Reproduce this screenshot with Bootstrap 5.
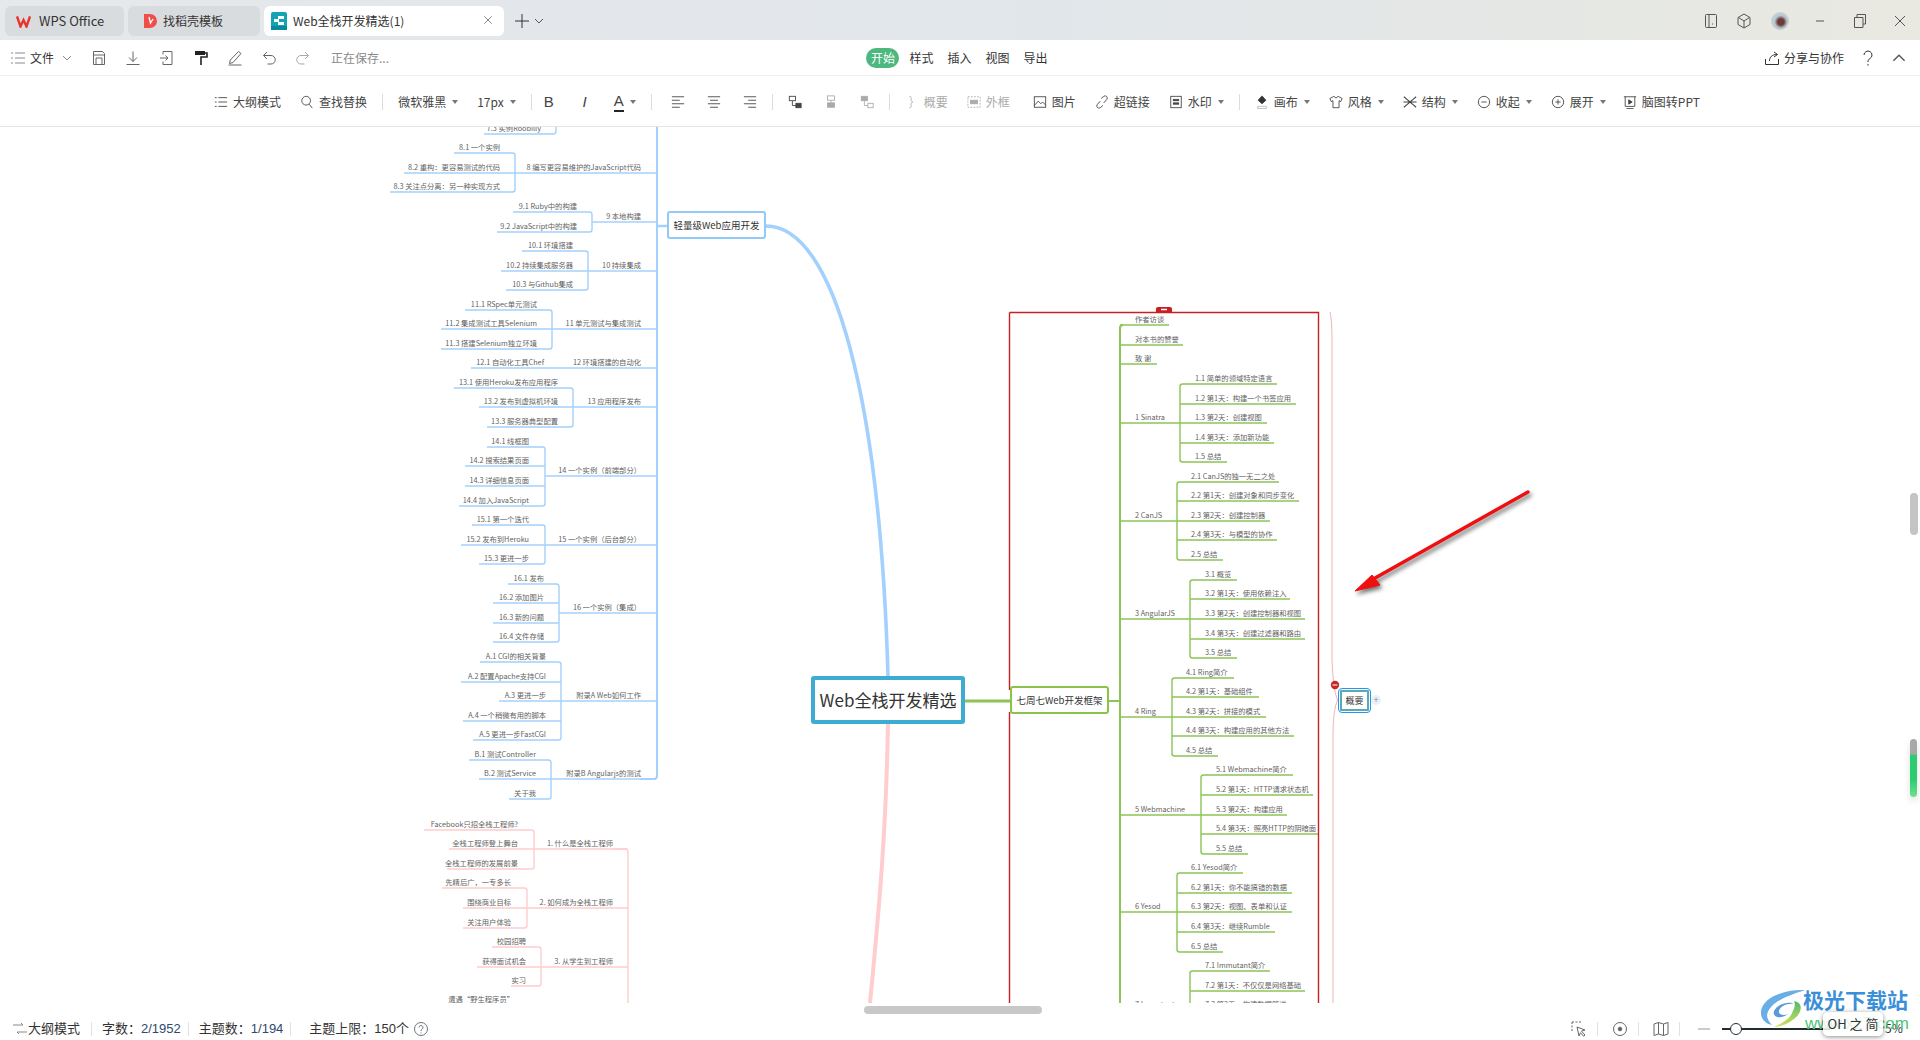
<!DOCTYPE html>
<html lang="zh-CN">
<head>
<meta charset="utf-8">
<title>Web全栈开发精选</title>
<link href="https://cdn.jsdelivr.net/npm/bootstrap@5.3.0/dist/css/bootstrap.min.css" rel="stylesheet">
<style>
html,body{height:100%;overflow:hidden;background:#fff}
body{font-family:"Noto Sans CJK SC","Liberation Sans",sans-serif;font-size:12px;color:#333}
.wps-app{height:1040px;width:1920px;position:relative}
.wps-i{width:16px;height:16px;flex:none;fill:none;stroke:currentColor;stroke-width:1;display:block}
.wps-titlebar{height:40px;background:linear-gradient(90deg,#e6e8eb,#e1e6ea 55%,#e9e9e1);padding:6px 0 4px 5px;flex:none}
.wps-tab{height:30px;border-radius:6px;background:#d9dcdf;padding-left:19px;gap:6px;margin-right:4px;flex:none;color:#333}
.wps-tab-a{width:119px;padding-left:11px;gap:8px;font-size:13px}.wps-tab-b{width:132px;padding-left:15px}.wps-tab-c{width:240px;background:#fff;padding-left:7px;position:relative}
.wps-tabx{position:absolute;left:218px;top:8px;color:#666}
.wps-plus{margin-left:6px;color:#333}.wps-chev{margin-left:4px;width:10px;height:10px;color:#555}
.wps-winbtns{margin-left:auto;color:#555}
.wps-winbtn{width:40px;display:flex;justify-content:center;align-items:center}
.wps-winbtn-n{width:33px}
.wps-avatar{width:18px;height:18px;border-radius:50%;background:radial-gradient(circle at 55% 55%,#6b3a3a 0 22%,#b9c8ce 45%,#d5dee2);}
.wps-menubar{height:36px;border-bottom:1px solid #f0f0f0;flex:none}
.wps-side{flex:1 1 0;min-width:0}
.wps-slot{width:34px;display:flex;justify-content:center;color:#666}
.wps-pill{background:#4cb87e;color:#fff;border-radius:10px;height:20px;line-height:20px;width:33px;white-space:nowrap}
.wps-mi{margin-left:10px}.wps-mi+.wps-mi{margin-left:14px}
.wps-muted{color:#8a8a8a}
.wps-ml10{margin-left:10px}.wps-ml11{margin-left:11px}
.wps-mr14{margin-right:14px}.wps-mr6{margin-right:6px}
.wps-toolbar{height:51px;border-bottom:1px solid #e5e5e5;flex:none;color:#444;padding:2px 6px 0 0}
.wps-tool{margin-left:19px;gap:5px;flex:none}
.wps-btn{margin-left:22px;flex:none;width:14px;display:flex;justify-content:center}
.wps-tool .wps-i,.wps-btn .wps-i{width:14px;height:14px}
.wps-sep{width:1px;height:16px;background:#dcdcdc;margin:0 15px;flex:none}
.wps-off{color:#aaa}
.wps-caret{width:0;height:0;border-left:3px solid transparent;border-right:3px solid transparent;border-top:4px solid #777;margin-left:1px;flex:none}
.wps-glyph{font-family:"Liberation Sans",sans-serif;font-size:15px;line-height:18px}
.wps-tb-b{margin-left:-5px}
.wps-tb-a{margin-left:22px}
.wps-tb-wide{margin-left:23px}
.wps-tb-near{margin-left:17px}
.wps-canvas{height:876px;position:relative;overflow:hidden;flex:none}
.wps-map{position:absolute;left:0;top:0;width:1920px;height:876px}
.wps-map text{font-family:"Noto Sans CJK SC","Liberation Sans",sans-serif;font-size:7.3px;fill:#5f5f5f}
.wps-node{position:absolute;display:flex;align-items:center;justify-content:center;background:#fff;color:#333;border-radius:3px;white-space:nowrap}
.wps-root{left:811px;top:549px;width:154px;height:48px;border:4px solid #3eabd0;font-size:17px}
.wps-n-green{left:1010px;top:559px;width:99px;height:28px;border:2px solid #8bc34a;font-size:9.5px}
.wps-n-blue{left:667px;top:84px;width:99px;height:28px;border:2px solid #90caf9;font-size:9.5px}
.wps-n-sum{left:1338px;top:561px;width:33px;height:25px;padding:1px;border:1.5px solid #2196f3;border-radius:4px;font-size:9px}
.wps-n-sum-in{flex:1;align-self:stretch;display:flex;align-items:center;justify-content:center;border:2px solid #5aa9b5;border-radius:1px}
.wps-addbtn{position:absolute;left:1371px;top:568px;width:10px;height:10px;border-radius:50%;background:#eceff5;color:#8a93a5;font-size:9px;line-height:10px;text-align:center}
.wps-vs{position:absolute;background:#c4c4c4;border-radius:4px}
.wps-vs1{left:1910px;top:366px;width:8px;height:42px}
.wps-vs2{left:1910px;top:612px;width:7px;height:58px;background:linear-gradient(#a8a8a8 0 26%,#2ecc71 28%,#2ecc71 70%,#6fe08f);box-shadow:0 4px 7px rgba(0,0,0,.12)}
.wps-hsbar{height:14px;padding:3px 0 3px 864px;flex:none}
.wps-hsthumb{width:178px;height:8px;border-radius:4px;background:#c8c8c8}
.wps-status{height:23px;flex:1 0 auto;font-family:"Liberation Sans","Noto Sans CJK SC",sans-serif;font-size:13px;padding-left:12px;color:#333}
.wps-stsep{width:1px;height:14px;background:#e2e2e2;margin:0 10px 0 7px;flex:none}
.wps-stnum{color:#2f4a6d}
.wps-sticon{width:36px;margin-left:4px;display:flex;justify-content:center;color:#666}
.wps-stdiv{width:1px;height:14px;background:#e2e2e2;flex:none}
.wps-slider{width:108px;height:2px;background:#222c33;position:relative;margin-left:10px;margin-right:90px}
.wps-knob{position:absolute;left:8px;top:-5px;width:12px;height:12px;border-radius:50%;background:#fff;border:1.5px solid #222c33}
.wps-mark{position:absolute;left:1760px;top:988px;width:150px;height:50px;pointer-events:none}
.wps-mark-t{position:absolute;left:43px;top:0;font-family:"Liberation Sans","Noto Sans CJK SC",sans-serif;font-weight:700;font-size:21px;line-height:25px;color:#3a8fd8;white-space:nowrap}
.wps-mark-u{position:absolute;left:45px;top:26px;font-family:"Liberation Sans",sans-serif;font-size:17px;line-height:20px;color:#4fc37a;white-space:nowrap}
.wps-ime{position:absolute;left:1823px;top:1012px;width:60px;height:24px;background:rgba(255,255,255,.82);border-radius:5px;box-shadow:0 1px 5px rgba(0,0,0,.45);font-size:13px;line-height:24px;text-align:center;color:#333;white-space:nowrap}
.wps-pct{position:absolute;left:1885px;top:1020px;font-size:12px;line-height:16px;color:#333}
.wps-arrow{filter:drop-shadow(2px 3px 2px rgba(0,0,0,.55))}
</style>
</head>
<body>
<svg width="0" height="0" class="position-absolute">
<defs>
<symbol id="i-lines" viewBox="0 0 16 16"><path d="M1 3h2M5 3h10M1 8h2M5 8h10M1 13h2M5 13h10"/></symbol>
<symbol id="i-chev" viewBox="0 0 10 10"><path d="M1 3l4 4 4-4"/></symbol>
<symbol id="i-save" viewBox="0 0 16 16"><path d="M2.5 1.5h9l2 2v11h-11zM2.5 5h11M5 14.5V8h6v6.5" /></symbol>
<symbol id="i-down" viewBox="0 0 16 16"><path d="M8 1.5v10M4 7.5l4 4 4-4M1.5 14.5h13"/></symbol>
<symbol id="i-exp" viewBox="0 0 16 16"><path d="M4 1.5h9v13H4M4 1.5v3M4 11.5v3M1 8h8M6.5 5.5 9 8l-2.5 2.5"/></symbol>
<symbol id="i-brush" viewBox="0 0 16 16"><path fill="#222" stroke="none" d="M2 1h10v4H2z"/><path d="M12 3h2v4H8v8" stroke="#222" stroke-width="1.6"/></symbol>
<symbol id="i-pen" viewBox="0 0 16 16"><path d="M11.5 1.5l2.5 2-8 9-3.5 1 .8-3.500zM1.500 15h13"/></symbol>
<symbol id="i-undo" viewBox="0 0 16 16"><path d="M6 2 2.500 5.500 6 9M2.500 5.500H10a3.800 3.800 0 0 1 0 8.500H6.500"/></symbol>
<symbol id="i-redo" viewBox="0 0 16 16"><path d="M10 2l3.500 3.500L10 9M13.500 5.500H6a3.800 3.800 0 0 0 0 8.500h3.500"/></symbol>
<symbol id="i-search" viewBox="0 0 16 16"><circle cx="7" cy="6.500" r="5"/><path d="M10.500 10.500 14 15"/></symbol>
<symbol id="i-al" viewBox="0 0 16 16"><path d="M1 2h14M1 6h9M1 10h14M1 14h9"/></symbol>
<symbol id="i-ac" viewBox="0 0 16 16"><path d="M1 2h14M3.500 6h9M1 10h14M3.500 14h9"/></symbol>
<symbol id="i-ar" viewBox="0 0 16 16"><path d="M1 2h14M6 6h9M1 10h14M6 14h9"/></symbol>
<symbol id="i-n1" viewBox="0 0 16 16"><rect x="1.500" y="1.500" width="7" height="5"/><path d="M5 6.500V12h4"/><rect x="9" y="9.500" width="6" height="5" fill="currentColor"/></symbol>
<symbol id="i-n2" viewBox="0 0 16 16"><rect x="4" y="1" width="8" height="5"/><path d="M8 6v3"/><rect x="4" y="9" width="8" height="5" fill="currentColor"/></symbol>
<symbol id="i-n3" viewBox="0 0 16 16"><rect x="1.500" y="1.500" width="7" height="5" fill="currentColor"/><path d="M5 6.500V12h4"/><rect x="9" y="9.500" width="6" height="5"/></symbol>
<symbol id="i-brace" viewBox="0 0 16 16"><path d="M5 1.500c2.500 0 2 1.500 2 3.500s.5 2.500 2 3c-1.500.5-2 1-2 3s.5 3.500-2 3.500"/></symbol>
<symbol id="i-frame" viewBox="0 0 16 16"><rect x="1" y="2" width="14" height="12" stroke-dasharray="2 1.500"/><rect x="4" y="6" width="8" height="4" fill="currentColor"/></symbol>
<symbol id="i-img" viewBox="0 0 16 16"><rect x="1.500" y="2" width="13" height="12"/><path d="M1.500 12 6 7l3 3 2-2 3.500 3.500"/></symbol>
<symbol id="i-link" viewBox="0 0 16 16"><path d="M7 4l3-2.500a2.500 2.500 0 0 1 3.500 3.500L10 9M9 12l-3 2.500A2.500 2.500 0 0 1 2.500 11L6 7"/></symbol>
<symbol id="i-wm" viewBox="0 0 16 16"><rect x="2" y="1.500" width="12" height="13"/><rect x="5" y="5" width="6" height="1.500" fill="currentColor"/><rect x="5" y="9" width="6" height="1.500" fill="currentColor"/></symbol>
<symbol id="i-bucket" viewBox="0 0 16 16"><path d="M8 1l4.500 5-4.500 4-4.500-4z" fill="#333"/><path d="M3 13h10v2.500H3z" stroke="#bbb"/></symbol>
<symbol id="i-shirt" viewBox="0 0 16 16"><path d="M5.500 1.500 1 4l1.500 3.500L4.500 6.500v8h7v-8l2 1L15 4l-4.500-2.500L8 3.500z"/></symbol>
<symbol id="i-fish" viewBox="0 0 16 16"><path d="M1 2l3.500 3 3.500 3 3.500-3L15 2M1 14l3.500-3L8 8l3.500 3L15 14M.5 8h15" stroke-width="1.200"/></symbol>
<symbol id="i-minus" viewBox="0 0 16 16"><circle cx="8" cy="8" r="6.500"/><path d="M5 8h6"/></symbol>
<symbol id="i-plus" viewBox="0 0 16 16"><circle cx="8" cy="8" r="6.500"/><path d="M5 8h6M8 5v6"/></symbol>
<symbol id="i-ppt" viewBox="0 0 16 16"><path d="M1 2h14M2.500 2v11h11V2M4 15.500h8"/><path d="M6.500 5.500v5l4-2.500z" fill="currentColor"/></symbol>
<symbol id="i-share" viewBox="0 0 16 16"><path d="M10 2l3.500 2.500L10 7M13 4.500C8 4.500 5.500 7 5.500 11M1.500 14.500h13M1.500 9v5.500M14.500 9v5.500"/></symbol>
<symbol id="i-phone" viewBox="0 0 16 16"><rect x="2.500" y="1.500" width="11" height="13" rx="1"/><path d="M6 1.500v13M9 11h1"/></symbol>
<symbol id="i-cube" viewBox="0 0 16 16"><path d="M8 1l6 3.500v7L8 15l-6-3.500v-7zM2.500 4.500 8 8l5.500-3.500M8 8v7"/></symbol>
<symbol id="i-restore" viewBox="0 0 16 16"><path d="M5 4V1.500h8.500V11H11M2.500 4.500H11v10H2.500z"/></symbol>
<symbol id="i-x" viewBox="0 0 16 16"><path d="M3 3l10 10M13 3 3 13"/></symbol>
<symbol id="i-outline" viewBox="0 0 16 16"><path d="M1 4h10l-2-2M15 11H5l2 2"/></symbol>
<symbol id="i-sel" viewBox="0 0 16 16"><path d="M1 1h9M1 1v9" stroke-dasharray="2 1.500"/><path d="M6 6l8 3-3.500 1.200L14 14l-1.500 1.200-3-3.500L8 15z"/></symbol>
<symbol id="i-target" viewBox="0 0 16 16"><circle cx="8" cy="8" r="6.500"/><circle cx="8" cy="8" r="1.800" fill="currentColor"/></symbol>
<symbol id="i-map" viewBox="0 0 16 16"><path d="M1 3l4.500-1.500 5 1.500L15 1.500v11.500L10.500 14.500 5.500 13 1 14.500zM5.500 1.500V13M10.500 3v11.500"/></symbol>
</defs>
</svg>

<div class="wps-app d-flex flex-column">

  <div class="wps-titlebar d-flex align-items-center">
    <div class="wps-tab wps-tab-a d-flex align-items-center">
      <svg width="15" height="13" viewBox="0 0 15 13"><path d="M1 1.500 4.500 11.500 7.500 5 10.500 11.500 14 1.500" fill="none" stroke="#e6352b" stroke-width="2.400"/></svg>
      <span>WPS Office</span>
    </div>
    <div class="wps-tab wps-tab-b d-flex align-items-center">
      <svg width="14" height="16" viewBox="0 0 14 16"><path d="M1 1h6a7 7 0 0 1 0 14H1z" fill="#ef4f48"/><path d="M6 4l1.500 6L10 6" fill="none" stroke="#fff" stroke-width="1.300"/></svg>
      <span>找稻壳模板</span>
    </div>
    <div class="wps-tab wps-tab-c d-flex align-items-center">
      <svg width="16" height="18" viewBox="0 0 16 18"><rect width="16" height="18" rx="2" fill="#12a3b4"/><rect x="0" y="14" width="16" height="4" fill="#0c8898"/><rect x="7" y="4" width="6" height="3" fill="#fff"/><rect x="3" y="7" width="5" height="3" fill="#fff"/><rect x="7" y="10" width="6" height="3" fill="#fff"/></svg>
      <span>Web全栈开发精选(1)</span>
      <svg class="wps-i wps-tabx" style="width:12px;height:12px"><use href="#i-x"/></svg>
    </div>
    <svg class="wps-i wps-plus" viewBox="0 0 16 16" stroke-width="1.500"><path d="M1 8h14M8 1v14"/></svg>
    <svg class="wps-i wps-chev"><use href="#i-chev"/></svg>
    <div class="wps-winbtns d-flex align-items-center">
      <div class="wps-winbtn wps-winbtn-n"><svg class="wps-i"><use href="#i-phone"/></svg></div>
      <div class="wps-winbtn wps-winbtn-n"><svg class="wps-i"><use href="#i-cube"/></svg></div>
      <div class="wps-winbtn"><div class="wps-avatar"></div></div>
      <div class="wps-winbtn"><svg class="wps-i" viewBox="0 0 16 16"><path d="M4 8h8"/></svg></div>
      <div class="wps-winbtn"><svg class="wps-i"><use href="#i-restore"/></svg></div>
      <div class="wps-winbtn"><svg class="wps-i"><use href="#i-x"/></svg></div>
    </div>
  </div>

  <div class="wps-menubar d-flex align-items-center">
    <div class="wps-side d-flex align-items-center">
      <svg class="wps-i wps-ml10 wps-muted"><use href="#i-lines"/></svg>
      <span class="ms-1">文件</span>
      <svg class="wps-i wps-chev ms-2 wps-muted"><use href="#i-chev"/></svg>
      <div class="wps-slot wps-ml10"><svg class="wps-i"><use href="#i-save"/></svg></div>
      <div class="wps-slot"><svg class="wps-i"><use href="#i-down"/></svg></div>
      <div class="wps-slot"><svg class="wps-i"><use href="#i-exp"/></svg></div>
      <div class="wps-slot"><svg class="wps-i"><use href="#i-brush"/></svg></div>
      <div class="wps-slot"><svg class="wps-i"><use href="#i-pen"/></svg></div>
      <div class="wps-slot"><svg class="wps-i"><use href="#i-undo"/></svg></div>
      <div class="wps-slot wps-off"><svg class="wps-i"><use href="#i-redo"/></svg></div>
      <span class="wps-muted wps-ml11">正在保存...</span>
    </div>
    <div class="d-flex align-items-center wps-mr6">
      <span class="wps-pill text-center">开始</span>
      <span class="wps-mi">样式</span>
      <span class="wps-mi">插入</span>
      <span class="wps-mi">视图</span>
      <span class="wps-mi">导出</span>
    </div>
    <div class="wps-side d-flex align-items-center justify-content-end">
      <svg class="wps-i me-1"><use href="#i-share"/></svg>
      <span>分享与协作</span>
      <svg class="wps-i ms-3" viewBox="0 0 16 16"><path d="M4 5a4 4 0 1 1 6 3.500C8.500 9.500 8 10 8 12M8 14v1.500"/></svg>
      <svg class="wps-i wps-chev ms-3 wps-mr14" viewBox="0 0 10 10" style="width:14px;height:14px"><path d="M1 7l4-4 4 4"/></svg>
    </div>
  </div>

  <div class="wps-toolbar d-flex align-items-center justify-content-center">
    <div class="wps-tool ms-0 d-flex align-items-center"><svg class="wps-i"><use href="#i-lines"/></svg><span>大纲模式</span></div>
    <div class="wps-tool d-flex align-items-center"><svg class="wps-i"><use href="#i-search"/></svg><span>查找替换</span></div>
    <div class="wps-sep"></div>
    <div class="wps-tool ms-0 d-flex align-items-center"><span>微软雅黑</span><i class="wps-caret"></i></div>
    <div class="wps-tool d-flex align-items-center"><span>17px</span><i class="wps-caret"></i></div>
    <div class="wps-sep"></div>
    <div class="wps-btn wps-tb-b wps-glyph">B</div>
    <div class="wps-btn fst-italic wps-glyph">I</div>
    <div class="wps-tool wps-tb-a d-flex align-items-center"><span class="border-bottom border-2 border-dark wps-glyph">A</span><i class="wps-caret"></i></div>
    <div class="wps-sep"></div>
    <div class="wps-btn ms-1"><svg class="wps-i"><use href="#i-al"/></svg></div>
    <div class="wps-btn"><svg class="wps-i"><use href="#i-ac"/></svg></div>
    <div class="wps-btn"><svg class="wps-i"><use href="#i-ar"/></svg></div>
    <div class="wps-sep"></div>
    <div class="wps-btn ms-0"><svg class="wps-i"><use href="#i-n1"/></svg></div>
    <div class="wps-btn wps-off"><svg class="wps-i"><use href="#i-n2"/></svg></div>
    <div class="wps-btn wps-off"><svg class="wps-i"><use href="#i-n3"/></svg></div>
    <div class="wps-sep"></div>
    <div class="wps-tool ms-0 d-flex align-items-center wps-off"><svg class="wps-i"><use href="#i-brace"/></svg><span>概要</span></div>
    <div class="wps-tool d-flex align-items-center wps-off"><svg class="wps-i"><use href="#i-frame"/></svg><span>外框</span></div>
    <div class="wps-tool wps-tb-wide d-flex align-items-center"><svg class="wps-i"><use href="#i-img"/></svg><span>图片</span></div>
    <div class="wps-tool d-flex align-items-center"><svg class="wps-i"><use href="#i-link"/></svg><span>超链接</span></div>
    <div class="wps-tool d-flex align-items-center"><svg class="wps-i"><use href="#i-wm"/></svg><span>水印</span><i class="wps-caret"></i></div>
    <div class="wps-sep"></div>
    <div class="wps-tool ms-0 d-flex align-items-center"><svg class="wps-i"><use href="#i-bucket"/></svg><span>画布</span><i class="wps-caret"></i></div>
    <div class="wps-tool d-flex align-items-center"><svg class="wps-i"><use href="#i-shirt"/></svg><span>风格</span><i class="wps-caret"></i></div>
    <div class="wps-tool d-flex align-items-center"><svg class="wps-i"><use href="#i-fish"/></svg><span>结构</span><i class="wps-caret"></i></div>
    <div class="wps-tool d-flex align-items-center"><svg class="wps-i"><use href="#i-minus"/></svg><span>收起</span><i class="wps-caret"></i></div>
    <div class="wps-tool d-flex align-items-center"><svg class="wps-i"><use href="#i-plus"/></svg><span>展开</span><i class="wps-caret"></i></div>
    <div class="wps-tool wps-tb-near d-flex align-items-center"><svg class="wps-i"><use href="#i-ppt"/></svg><span>脑图转PPT</span></div>
  </div>

  <div class="wps-canvas">
    <svg id="wpsMap" class="wps-map" viewBox="0 127 1920 876"></svg>
    <div class="wps-node wps-n-blue">轻量级Web应用开发</div>
    <div class="wps-node wps-root">Web全栈开发精选</div>
    <div class="wps-node wps-n-green">七周七Web开发框架</div>
    <div class="wps-node wps-n-sum"><span class="wps-n-sum-in">概要</span></div>
    <div class="wps-addbtn">+</div>
    <div class="wps-vs wps-vs1"></div>
    <div class="wps-vs wps-vs2"></div>
  </div>

  <div class="wps-hsbar"><div class="wps-hsthumb"></div></div>

  <div class="wps-status d-flex align-items-center">
    <svg class="wps-i wps-muted"><use href="#i-outline"/></svg>
    <span class="ms-0 me-1">大纲模式</span>
    <div class="wps-stsep"></div>
    <span>字数：<span class="wps-stnum">2/1952</span></span>
    <div class="wps-stsep"></div>
    <span>主题数：<span class="wps-stnum">1/194</span></span>
    <div class="wps-stsep"></div>
    <span class="ms-2">主题上限：150个</span>
    <svg class="wps-i ms-1 text-secondary" viewBox="0 0 16 16" stroke-width=".8"><circle cx="8" cy="8" r="6.500"/><path d="M6 6.500a2 2 0 1 1 3 1.700c-.8.500-1 1-1 1.800M8 11.500v1"/></svg>
    <div class="d-flex align-items-center ms-auto">
      <div class="wps-sticon"><svg class="wps-i"><use href="#i-sel"/></svg></div><div class="wps-stdiv"></div>
      <div class="wps-sticon"><svg class="wps-i"><use href="#i-target"/></svg></div><div class="wps-stdiv"></div>
      <div class="wps-sticon"><svg class="wps-i"><use href="#i-map"/></svg></div><div class="wps-stdiv"></div>
      <svg class="wps-i ms-3" viewBox="0 0 16 16" stroke-width="2" style="color:#999"><path d="M2 8h12"/></svg>
      <div class="wps-slider"><div class="wps-knob"></div></div>
    </div>
  </div>

  <div class="wps-pct">5%</div>
  <div class="wps-mark">
    <svg class="position-absolute top-0 start-0" width="46" height="42" viewBox="0 0 46 42">
      <defs><linearGradient id="gSw" x1="0" y1="0" x2="0" y2="1"><stop offset="0" stop-color="#4fb96b"/><stop offset="1" stop-color="#d6e25a"/></linearGradient></defs>
      <path d="M45 2C25 1 3 9 1 23c-1 8 5 13 11 14C6 31 5 25 12 18 20 10 34 6 45 2Z" fill="#6aaee6"/>
      <path d="M14 23c4-8 16-10 20-7-8-1-14 3-15 7-1 4 5 5 9 3-8 6-16 3-14-3Z" fill="#5c9bd8"/>
      <path d="M34 13c10 2 8 12 0 18-6 5-14 8-20 8 8-4 16-8 18-14 2-4 4-8 2-12Z" fill="url(#gSw)"/>
    </svg>
    <div class="wps-mark-t">极光下载站</div>
    <div class="wps-mark-u">www.xz7.com</div>
  </div>
  <div class="wps-ime">OH 之 简</div>
</div>

<script>
const BLUE='#a3d0fc',PINK='#ffcdcd',GREEN='#8cc455';
let s='';
const line=(d,c,w)=>{s+=`<path d="${d}" fill="none" stroke="${c}" stroke-width="${w||1.4}"/>`};
const txt=(t,x,y,a)=>{s+=`<text x="${x}" y="${y}" text-anchor="${a}" xml:space="preserve">${t}</text>`};
const UP=3.2;

/* A branch: parent label over a line, a bracket, and children. dir -1 runs leftwards. */
function branch(dir,c,name,px,py,bx,cx,endx,kids){
  const a=dir<0?'end':'start', r=2.5, cornerX=bx+dir*r;
  txt(name,px,py-UP,a);
  line(`M${bx} ${py}H${endx}`,c);
  kids.forEach((k,i)=>{
    const [t,y,far]=k;
    txt(t,cx,y-UP,a);
    if(i==0||i==kids.length-1)return;
    line(`M${far} ${y}H${bx}`,c);
  });
  const f=kids[0],l=kids[kids.length-1];
  line(`M${f[2]} ${f[1]}H${cornerX}Q${bx} ${f[1]} ${bx} ${f[1]+r}V${l[1]-r}Q${bx} ${l[1]} ${cornerX} ${l[1]}H${l[2]}`,c);
}
function leaf(t,x,y,far,c,end){ txt(t,x,y-UP,'start'); line(`M${far} ${y}H${end}`,c); }

/* connectors */
line('M657 127V776Q657 779 654 779H640',BLUE,2);
line('M657 226H667',BLUE,2.5);
line('M766 226C835 226 880 400 888 676',BLUE,3.6);
line('M888 724C886 830 880 900 870 1003',PINK,4);
line('M965 701H1010',GREEN,3);
line('M1109 701H1120',GREEN,2);
line('M1123 325Q1120 325 1120 328V1003',GREEN,2);
line('M613 849H625Q628 849 628 852V1003',PINK,1.4);

/* blue, left */
const L=(n,y,bx,cx,k,px)=>branch(-1,BLUE,n,px||641,y,bx,cx,656,k);
line('M484 134H553Q556 134 556 131V127',BLUE); txt('7.3 实例Roobilly',541,130.8,'end');
L('8 编写更容易维护的JavaScript代码',173,515,500,[['8.1 一个实例',153,454],['8.2 重构：更容易测试的代码',173,404],['8.3 关注点分离：另一种实现方式',192,390]]);
L('9 本地构建',222,592,577,[['9.1 Ruby中的构建',212,513],['9.2 JavaScript中的构建',232,497]]);
L('10 持续集成',271,588,573,[['10.1 环境搭建',251,522],['10.2 持续集成服务器',271,501],['10.3 与Github集成',290,506]]);
L('11 单元测试与集成测试',329,552,537,[['11.1 RSpec单元测试',310,465],['11.2 集成测试工具Selenium',329,441],['11.3 搭建Selenium独立环境',349,441]]);
txt('12 环境搭建的自动化',641,368-UP,'end');txt('12.1 自动化工具Chef',544,368-UP,'end');line('M471 368H656',BLUE);
L('13 应用程序发布',407,573,558,[['13.1 使用Heroku发布应用程序',388,454],['13.2 发布到虚拟机环境',407,479],['13.3 服务器典型配置',427,487]]);
L('14 一个实例（前端部分）',476,545,529,[['14.1 线框图',447,487],['14.2 搜索结果页面',466,465],['14.3 详细信息页面',486,465],['14.4 加入JavaScript',506,459]]);
L('15 一个实例（后台部分）',545,545,529,[['15.1 第一个迭代',525,472],['15.2 发布到Heroku',545,461],['15.3 更进一步',564,479]]);
L('16 一个实例（集成）',613,559,544,[['16.1 发布',584,508],['16.2 添加图片',603,493],['16.3 新的问题',623,493],['16.4 文件存储',642,493]]);
L('附录A Web如何工作',701,561,546,[['A.1 CGI的相关背景',662,480],['A.2 配置Apache支持CGI',682,461],['A.3 更进一步',701,499],['A.4 一个稍微有用的脚本',721,463],['A.5 更进一步FastCGI',740,473]]);
L('附录B Angularjs的测试',779,551,536,[['B.1 测试Controller',760,469],['B.2 测试Service',779,479],['关于我',799,509]]);

/* pink, left */
const P=(n,y,bx,cx,k)=>branch(-1,PINK,n,613,y,bx,cx,628,k);
P('1. 什么是全栈工程师',849,534,518,[['Facebook只招全栈工程师?',830,424],['全栈工程师登上舞台',849,449],['全栈工程师的发展前景',869,447]]);
P('2. 如何成为全栈工程师',908,527,511,[['先精后广，一专多长',888,442],['围绕商业目标',908,463],['关注用户体验',928,463]]);
P('3. 从学生到工程师',967,541,526,[['校园招聘',947,492],['获得面试机会',967,477],['实习',986,511]]);
txt('遭遇“野生程序员”',514,1002,'end');

/* green, right */
const G=(n,y,bx,cx,k)=>branch(1,GREEN,n,1135,y,bx,cx,1120,k);
leaf('作者访谈',1135,325,1169,GREEN,1120);
leaf('对本书的赞誉',1135,345,1183,GREEN,1120);
leaf('致 谢',1135,364,1157,GREEN,1120);
G('1 Sinatra',423,1180,1195,[['1.1 简单的领域特定语言',384,1277],['1.2 第1天：构建一个书签应用',404,1296],['1.3 第2天：创建视图',423,1267],['1.4 第3天：添加新功能',443,1274],['1.5 总结',462,1227]]);
G('2 CanJS',521,1177,1191,[['2.1 CanJS的独一无二之处',482,1279],['2.2 第1天：创建对象和同步变化',501,1299],['2.3 第2天：创建控制器',521,1270],['2.4 第3天：与模型的协作',540,1277],['2.5 总结',560,1223]]);
G('3 AngularJS',619,1190,1205,[['3.1 概览',580,1237],['3.2 第1天：使用依赖注入',599,1290],['3.3 第2天：创建控制器和视图',619,1305],['3.4 第3天：创建过滤器和路由',639,1305],['3.5 总结',658,1237]]);
G('4 Ring',717,1172,1186,[['4.1 Ring简介',678,1234],['4.2 第1天：基础组件',697,1259],['4.3 第2天：拼接的模式',717,1266],['4.4 第3天：构建应用的其他方法',736,1294],['4.5 总结',756,1218]]);
G('5 Webmachine',815,1201,1216,[['5.1 Webmachine简介',775,1293],['5.2 第1天：HTTP请求状态机',795,1313],['5.3 第2天：构建应用',815,1287],['5.4 第3天：照亮HTTP的阴暗面',834,1319],['5.5 总结',854,1248]]);
G('6 Yesod',912,1177,1191,[['6.1 Yesod简介',873,1243],['6.2 第1天：你不能搞错的数据',893,1292],['6.3 第2天：视图、表单和认证',912,1292],['6.4 第3天：继续Rumble',932,1275],['6.5 总结',952,1223]]);
G('7 Immutant',1010,1190,1205,[['7.1 Immutant简介',971,1270],['7.2 第1天：不仅仅是网络基础',991,1305],['7.3 第2天：构建数据管道',1010,1300]]);

/* summary frame and brace */
s+=`<path d="M1009.500 312.500H1318.500V1003M1009.500 312.500V690M1009.500 712V1003" fill="none" stroke="#c82020" stroke-width="1.400"/>`;
s+=`<path d="M1156 312v-3q0-2 2-2h12q2 0 2 2v3z" fill="#c82020"/><path d="M1161 309.500h6" stroke="#fff" stroke-width="1.500"/>`;
line('M1330 312Q1332 320 1332 340V660Q1333 690 1337.500 700Q1333 710 1333 735V1003','#eeb4b4',1);
s+=`<circle cx="1335" cy="685" r="4.200" fill="#c62828"/><path d="M1332.500 685h5" stroke="#fff" stroke-width="1"/>`;

/* annotation arrow */
s+=`<g class="wps-arrow"><path d="M1528 492 1368 582" stroke="#f00f0f" stroke-width="3.400" stroke-linecap="round"/><path d="M1355 591 1372 575 1380 585Z" fill="#f00f0f" stroke="#f00f0f"/></g>`;

document.getElementById('wpsMap').innerHTML=s;
</script>
<script src="https://cdn.jsdelivr.net/npm/bootstrap@5.3.0/dist/js/bootstrap.bundle.min.js"></script>
</body>
</html>
